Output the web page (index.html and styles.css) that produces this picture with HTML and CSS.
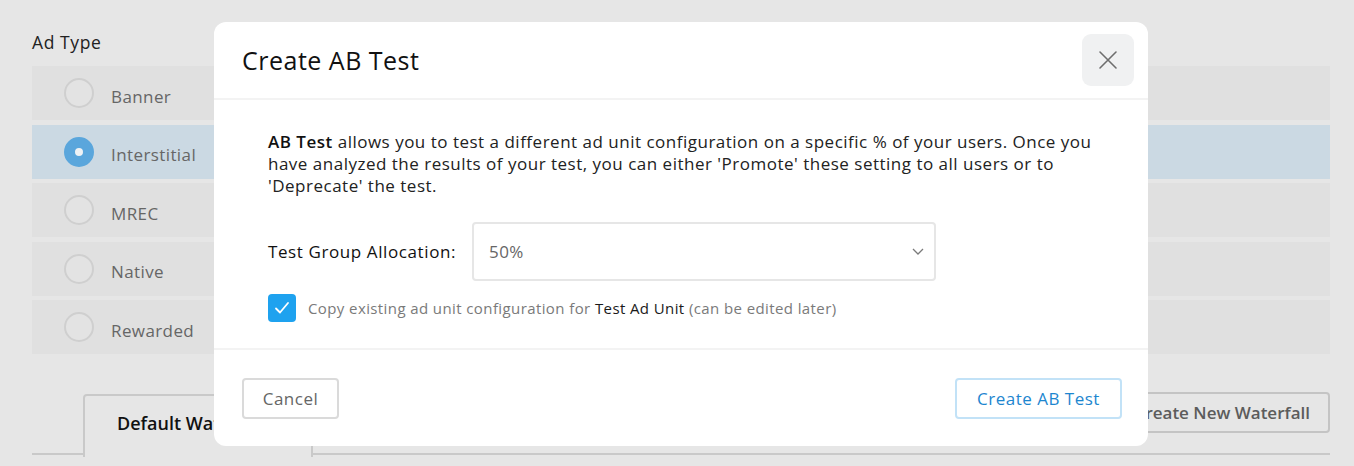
FILE: index.html
```html
<!DOCTYPE html>
<html lang="en">
<head>
<meta charset="utf-8">
<title>Create AB Test</title>
<link rel="stylesheet" href="styles.css">
</head>
<body>
<div class="page">
  <div class="section-label">Ad Type</div>
  <div class="ad-list">
    <div class="ad-row"><span class="radio"></span><span class="ad-name">Banner</span></div>
    <div class="ad-row selected"><span class="radio on"></span><span class="ad-name">Interstitial</span></div>
    <div class="ad-row"><span class="radio"></span><span class="ad-name">MREC</span></div>
    <div class="ad-row"><span class="radio"></span><span class="ad-name">Native</span></div>
    <div class="ad-row"><span class="radio"></span><span class="ad-name">Rewarded</span></div>
  </div>
  <div class="tabs">
    <div class="tab">Default Waterfall</div>
    <button class="new-wf">Create New Waterfall</button>
  </div>
</div>

<div class="modal">
  <div class="modal-head">
    <h1 class="modal-title">Create AB Test</h1>
    <button class="close" aria-label="Close">
      <svg width="20" height="20" viewBox="0 0 20 20"><path d="M2 2 L18 18 M18 2 L2 18" stroke="#6e6e6e" stroke-width="1.6" fill="none" stroke-linecap="round"/></svg>
    </button>
  </div>
  <div class="modal-body">
    <p class="intro"><b>AB Test</b> allows you to test a different ad unit configuration on a specific % of your users. Once you<br>have analyzed the results of your test, you can either 'Promote' these setting to all users or to<br>'Deprecate' the test.</p>
    <div class="field">
      <label class="field-label">Test Group Allocation:</label>
      <div class="select">
        <span>50%</span>
        <svg width="12" height="7" viewBox="0 0 12 7"><path d="M1 1 L6 6 L11 1" stroke="#7a7a7a" stroke-width="1.3" fill="none"/></svg>
      </div>
    </div>
    <div class="check-row">
      <span class="checkbox">
        <svg width="16" height="14" viewBox="0 0 16 14"><path d="M2 7.5 L6 11.5 L14 2" stroke="#fff" stroke-width="1.8" fill="none" stroke-linecap="round" stroke-linejoin="round"/></svg>
      </span>
      <span class="check-text">Copy existing ad unit configuration for <span class="strong">Test Ad Unit</span> (can be edited later)</span>
    </div>
  </div>
  <div class="modal-foot">
    <button class="btn cancel">Cancel</button>
    <button class="btn primary">Create AB Test</button>
  </div>
</div>
</body>
</html>
```

FILE: styles.css
```css
* { box-sizing: border-box; }
html, body { margin: 0; padding: 0; }
body {
  background: #e6e6e6;
  font-family: "Open Sans", Lato, sans-serif;
  width: 1354px;
  height: 466px;
  overflow: hidden;
  position: relative;
}
.page {
  padding: 30px 24px 0 32px;
}
.section-label {
  font-size: 17.5px;
  font-weight: 500;
  letter-spacing: 0.6px;
  color: #222;
  line-height: 24px;
  height: 24px;
}
.ad-list {
  margin-top: 12px;
  width: 1298px;
  display: flex;
  flex-direction: column;
  gap: 4.5px;
}
.ad-row {
  height: 54px;
  background: #e0e0e0;
  display: flex;
  align-items: center;
  padding-left: 32px;
  gap: 17px;
}
.ad-row.selected { background: #cbd9e3; }
.radio {
  width: 30px;
  height: 30px;
  border-radius: 50%;
  border: 2px solid #cfcfcf;
  background: #e3e3e3;
  display: inline-block;
}
.radio.on {
  border: 11px solid #5aa6dc;
  background: #eef2f5;
}
.ad-name {
  font-size: 17px;
  letter-spacing: 0.4px;
  color: #666;
  position: relative;
  top: 3px;
}
.tabs {
  margin-top: 38px;
  width: 1298px;
  height: 63px;
  display: flex;
  align-items: flex-start;
  border-bottom: 2px solid #c9c9c9;
}
.tab {
  margin-left: 51px;
  width: 230px;
  height: 63px;
  border: 2px solid #c9c9c9;
  border-bottom: none;
  border-radius: 4px 4px 0 0;
  background: #e6e6e6;
  font-size: 18px;
  font-weight: 600;
  color: #111;
  padding: 15px 0 0 32px;
  white-space: nowrap;
  overflow: hidden;
  position: relative;
  top: 2px;
}
.new-wf {
  margin-left: auto;
  height: 41px;
  padding: 0 18px 0 40px;
  border: 2px solid #c4c4c4;
  border-radius: 4px;
  background: #e6e6e6;
  font-family: inherit;
  font-size: 17px;
  font-weight: 600;
  color: #5c5c5c;
}

/* modal */
.modal {
  position: absolute;
  left: 214px;
  top: 22px;
  width: 934px;
  height: 424px;
  background: #fff;
  border-radius: 12px;
  display: flex;
  flex-direction: column;
}
.modal-head {
  height: 78px;
  display: flex;
  align-items: center;
  justify-content: space-between;
  padding: 0 14px 0 28px;
  border-bottom: 2px solid #f3f3f3;
}
.modal-title {
  margin: 0;
  font-size: 25px;
  font-weight: 500;
  letter-spacing: 0.5px;
  color: #111;
}
.close {
  width: 52px;
  height: 52px;
  border: none;
  border-radius: 9px;
  background: #f0f1f2;
  display: flex;
  align-items: center;
  justify-content: center;
  padding: 0;
}
.modal-body {
  height: 250px;
  padding: 31px 20px 0 54px;
  border-bottom: 2px solid #f3f3f3;
}
.intro {
  margin: 0;
  font-size: 17px;
  letter-spacing: 0.5px;
  line-height: 22px;
  color: #222;
  white-space: nowrap;
}
.intro b { font-weight: 600; color: #111; }
.field {
  margin-top: 25px;
  display: flex;
  align-items: center;
  gap: 16px;
}
.field-label {
  font-size: 17px;
  font-weight: 500;
  letter-spacing: 0.6px;
  color: #111;
}
.select {
  width: 464px;
  height: 59px;
  border: 2px solid #e6e6e6;
  border-radius: 4px;
  display: flex;
  align-items: center;
  justify-content: space-between;
  padding: 0 10px 0 15px;
  font-size: 17px;
  letter-spacing: 0.4px;
  color: #666;
}
.check-row {
  margin-top: 13px;
  display: flex;
  align-items: center;
  gap: 12px;
}
.checkbox {
  width: 28px;
  height: 28px;
  border-radius: 4px;
  background: #1ea2ef;
  display: flex;
  align-items: center;
  justify-content: center;
}
.check-text {
  font-size: 15px;
  letter-spacing: 0.4px;
  color: #7a7a7a;
}
.check-text .strong { color: #1a1a1a; }
.modal-foot {
  flex: 1;
  display: flex;
  align-items: center;
  justify-content: space-between;
  padding: 0 26px 0 28px;
}
.btn {
  height: 41px;
  border-radius: 4px;
  background: #fff;
  font-family: inherit;
  font-size: 17px;
  letter-spacing: 0.5px;
  padding: 0;
}
.cancel {
  width: 97px;
  border: 2px solid #dadada;
  color: #666;
}
.primary {
  width: 167px;
  border: 2px solid #c2e2f7;
  color: #1d86cf;
}
```
